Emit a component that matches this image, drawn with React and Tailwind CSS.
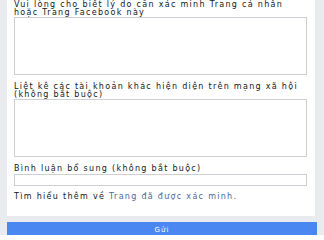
export default function App() {
  const label = 'text-[8px] leading-[7.5px] tracking-[1.3px] text-[#141823]';
  return (
    <div className="w-[324px] h-[235px] overflow-hidden bg-[#e9ebee] font-['DejaVu_Sans',sans-serif]">
      <div className="ml-[7px] w-[308px] bg-white pl-[7px] pr-[8px] pt-[1px] pb-[16px]">
        <p className={label}>
          Vui lòng cho biết lý do cần xác minh Trang cá nhân
          <br />
          hoặc Trang Facebook này
        </p>
        <div className="mt-[1px] h-[58px] border border-[#ccd0d5] bg-white" />
        <p className={`${label} mt-[8px]`}>
          Liệt kê các tài khoản khác hiện diện trên mạng xã hội
          <br />
          (không bắt buộc)
        </p>
        <div className="mt-[1px] h-[58px] border border-[#ccd0d5] bg-white" />
        <p className={`${label} mt-[8px]`}>Bình luận bổ sung (không bắt buộc)</p>
        <div className="mt-[1px] h-[12px] border border-[#ccd0d5] bg-white" />
        <p className={`${label} mt-[7px]`}>
          Tìm hiểu thêm về <span className="text-[#4b67a1]">Trang đã được xác minh.</span>
        </p>
      </div>
      <button className="mt-[6px] ml-[7px] flex h-[16px] w-[310px] items-center justify-center bg-[#4a87f0] text-[7px] leading-[7px] tracking-[1px] text-white">
        Gửi
      </button>
    </div>
  );
}
